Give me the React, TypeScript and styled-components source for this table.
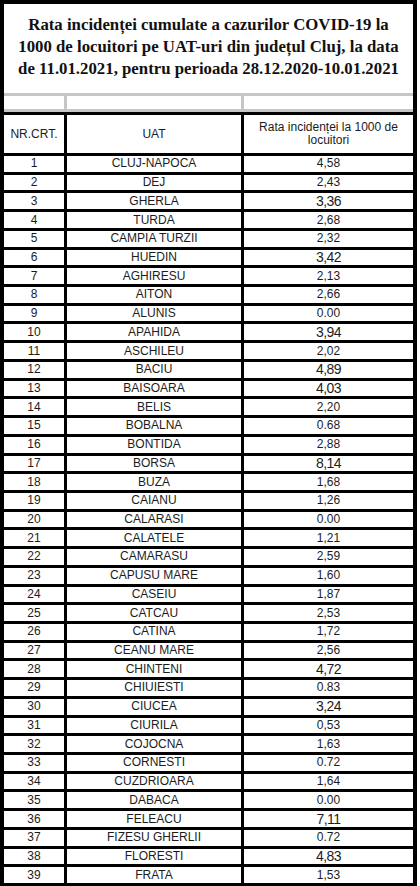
import React from 'react';
import styled, { createGlobalStyle } from 'styled-components';

const GlobalStyle = createGlobalStyle`
  html, body {
    margin: 0;
    padding: 0;
    background: #ffffff;
  }
`

const Frame = styled.div`
  width: 409px;
  border: 4px solid #000000;
  border-bottom: none;
  background: #ffffff;
`

const Title = styled.h1`
  margin: 0;
  height: 89px;
  display: flex;
  flex-direction: column;
  align-items: center;
  justify-content: center;
  padding-bottom: 4px;
  box-sizing: border-box;
  text-align: center;
  font-family: "Liberation Serif", "Times New Roman", serif;
  font-weight: bold;
  font-size: 16.8px;
  line-height: 22px;
  color: #111111;
  white-space: nowrap;
`

interface RowProps {
  $line: string;
  $height: number;
  $top?: boolean;
}

const Row = styled.div<RowProps>`
  display: grid;
  grid-template-columns: 63px 177px 169px;
  box-sizing: border-box;
  height: ${p => p.$height}px;
  border-bottom: 3px solid ${p => p.$line};
  border-top: ${p => p.$top ? `3px solid ${p.$line}` : 'none'};
`

interface CellProps {
  $line: string;
  $last?: boolean;
  $big?: boolean;
}

const Cell = styled.div<CellProps>`
  display: flex;
  align-items: center;
  justify-content: center;
  text-align: center;
  box-sizing: border-box;
  border-right: ${p => p.$last ? 'none' : `3px solid ${p.$line}`};
  font-family: "Liberation Sans", Arial, sans-serif;
  font-size: ${p => p.$big ? '14px' : '12px'};
  letter-spacing: ${p => p.$big ? '-0.6px' : '0'};
  line-height: 13px;
  color: #1c1c1c;
  white-space: nowrap;
`

const HeaderText = styled.span`
  white-space: normal;
  padding: 0 14px;
`

type Entry = [string, string, boolean?]

const rows: Entry[] = [
  ['CLUJ-NAPOCA', '4,58'],
  ['DEJ', '2,43'],
  ['GHERLA', '3,36', true],
  ['TURDA', '2,68'],
  ['CAMPIA TURZII', '2,32'],
  ['HUEDIN', '3,42', true],
  ['AGHIRESU', '2,13'],
  ['AITON', '2,66'],
  ['ALUNIS', '0.00'],
  ['APAHIDA', '3,94', true],
  ['ASCHILEU', '2,02'],
  ['BACIU', '4,89', true],
  ['BAISOARA', '4,03', true],
  ['BELIS', '2,20'],
  ['BOBALNA', '0.68'],
  ['BONTIDA', '2,88'],
  ['BORSA', '8,14', true],
  ['BUZA', '1,68'],
  ['CAIANU', '1,26'],
  ['CALARASI', '0.00'],
  ['CALATELE', '1,21'],
  ['CAMARASU', '2,59'],
  ['CAPUSU MARE', '1,60'],
  ['CASEIU', '1,87'],
  ['CATCAU', '2,53'],
  ['CATINA', '1,72'],
  ['CEANU MARE', '2,56'],
  ['CHINTENI', '4,72', true],
  ['CHIUIESTI', '0.83'],
  ['CIUCEA', '3,24', true],
  ['CIURILA', '0,53'],
  ['COJOCNA', '1,63'],
  ['CORNESTI', '0.72'],
  ['CUZDRIOARA', '1,64'],
  ['DABACA', '0.00'],
  ['FELEACU', '7,11', true],
  ['FIZESU GHERLII', '0.72'],
  ['FLORESTI', '4,83', true],
  ['FRATA', '1,53'],
]

const GRAY = '#c6c6c6'
const BLACK = '#000000'

function App() {
  return (
    <>
      <GlobalStyle />
      <Frame>
        <Title>
          <span>Rata incidenței cumulate a cazurilor COVID-19 la</span>
          <span>1000 de locuitori pe UAT-uri din județul Cluj, la data</span>
          <span>de 11.01.2021, pentru perioada 28.12.2020-10.01.2021</span>
        </Title>
        <Row $line={GRAY} $height={19} $top>
          <Cell $line={GRAY} />
          <Cell $line={GRAY} />
          <Cell $line={GRAY} $last />
        </Row>
        <Row $line={BLACK} $height={44} $top>
          <Cell $line={BLACK}>NR.CRT.</Cell>
          <Cell $line={BLACK}>UAT</Cell>
          <Cell $line={BLACK} $last>
            <HeaderText>Rata incidenței la 1000 de locuitori</HeaderText>
          </Cell>
        </Row>
        {rows.map(([name, value, big], i) => (
          <Row key={name} $line={BLACK} $height={18.72}>
            <Cell $line={BLACK}>{i + 1}</Cell>
            <Cell $line={BLACK}>{name}</Cell>
            <Cell $line={BLACK} $last $big={big}>{value}</Cell>
          </Row>
        ))}
      </Frame>
    </>
  );
}

export default App;
